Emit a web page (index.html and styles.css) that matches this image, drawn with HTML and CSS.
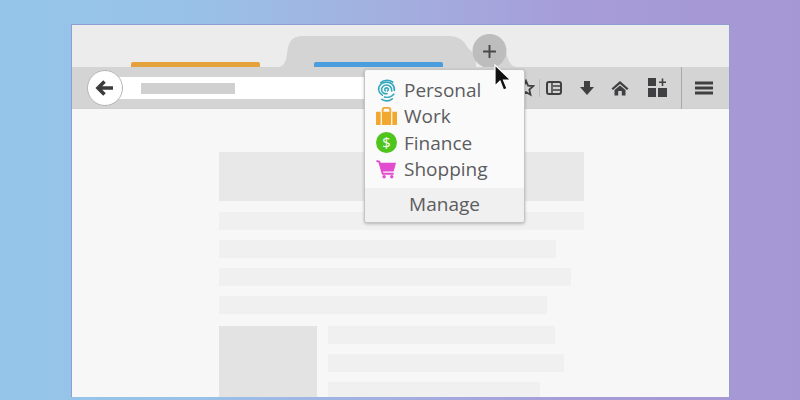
FILE: index.html
```html
<!DOCTYPE html>
<html lang="en">
<head>
<meta charset="utf-8">
<title>Multi-Account Containers</title>
<link rel="stylesheet" href="styles.css">
</head>
<body>
<div class="window">
  <div class="tabstrip">
    <div class="tab tab-orange"><span class="tab-line line-orange"></span></div>
    <div class="tab tab-active">
      <svg class="tab-shape" viewBox="0 0 198 31" preserveAspectRatio="none"><path d="M0 31C6 31 8 25 9 18C10.500 6 13 0 26 0H170C180 0 186 4 190 12L198 20V31Z" fill="#d4d4d4"/></svg>
      <span class="tab-line line-blue"></span>
    </div>
    <div class="newtab">
      <svg class="newtab-bg" viewBox="0 0 50 37"><path d="M30 20C40 20 40 24 41 26C43 32 45 36 50 37H30Z" fill="#d4d4d4"/><circle cx="23.500" cy="21" r="17" fill="#bdbdbd"/></svg>
      <svg class="plus" viewBox="0 0 14 14"><path d="M7 1V13M1 7H13" stroke="#48484a" stroke-width="1.800"/></svg>
    </div>
  </div>
  <div class="toolbar">
    <div class="back"><svg viewBox="0 0 20 20"><path d="M9.500 3.500L3 10L9.500 16.500M3.500 10H18" fill="none" stroke="#3c3c3e" stroke-width="3.600"/></svg></div>
    <div class="urlbar"><span class="url-text"></span></div>
    <div class="tools">
      <svg class="ico star" viewBox="0 0 20 20"><path d="M10 2L12.300 7.400L18 7.900L13.700 11.700L15 17.500L10 14.500L5 17.500L6.300 11.700L2 7.900L7.700 7.400Z" fill="none" stroke="#404042" stroke-width="2"/></svg>
      <span class="sep-small"></span>
      <svg class="ico sidebar" viewBox="0 0 16 16"><rect x="1" y="2" width="14" height="12" rx="2" fill="none" stroke="#404042" stroke-width="2"/><path d="M6 2V14M7 6H14M7 10H14" stroke="#404042" stroke-width="1.500"/></svg>
      <svg class="ico download" viewBox="0 0 16 16"><path d="M5 1H11V7H15L8 15L1 7H5Z" fill="#404042"/></svg>
      <svg class="ico home" viewBox="0 0 18 16"><path d="M9 1L0.500 8.500L2 10L9 4L16 10L17.500 8.500ZM3.500 10L9 5.500L14.500 10V15.500H10.800V11H7.200V15.500H3.500Z" fill="#404042"/></svg>
      <svg class="ico grid" viewBox="0 0 19 19"><rect x="0" y="0" width="8" height="8" fill="#404042"/><rect x="0" y="10" width="8" height="9" fill="#404042"/><rect x="10" y="10" width="9" height="9" fill="#404042"/><path d="M14.500 0.500V8M11 4.200H18" stroke="#404042" stroke-width="1.600"/></svg>
      <span class="sep-tall"></span>
      <svg class="ico menu" viewBox="0 0 18 14"><path d="M0 2H18M0 7H18M0 12H18" stroke="#404042" stroke-width="2.800" stroke-linecap="round"/></svg>
    </div>
  </div>
  <div class="content">
    <div class="hero"></div>
    <div class="line w-full"></div>
    <div class="line w-337"></div>
    <div class="line w-352"></div>
    <div class="line w-328"></div>
    <div class="media">
      <div class="thumb"></div>
      <div class="media-lines">
        <div class="line w-227"></div>
        <div class="line w-236"></div>
        <div class="line w-212"></div>
      </div>
    </div>
  </div>

  <div class="popup">
    <ul class="list">
      <li class="item">
        <svg class="cicon" viewBox="0 0 20 22"><g fill="none" stroke="#35a7bd" stroke-width="1.500" stroke-linecap="round"><path d="M4.500 3.500C7.500 0.500 13 0.500 16 3"/><path d="M17.500 11C18 6 14.500 3 10 3C6 3 2 6 2.500 10.500C2.800 13 4.500 14.500 6 15.500"/><path d="M15 11.500C15.500 8 12.800 5.800 10 5.800C7.200 5.800 5 8 5.300 10.500C5.600 13 8 14.500 10.500 14"/><path d="M11 11.300C12.500 10.500 12 8.500 10 8.500C8.300 8.500 7.800 10.500 9 11.300"/><path d="M8 17.300C11 18 15 17 17 14.500"/><path d="M5.500 19.500C9 21.500 13 21 15.500 19"/></g></svg>
        <span>Personal</span>
      </li>
      <li class="item">
        <svg class="cicon" viewBox="0 0 22 20"><path d="M7 5V3C7 2 8 1 9 1H13C14 1 15 2 15 3V5" fill="none" stroke="#f2a72e" stroke-width="2"/><rect x="0" y="5" width="22" height="14" rx="0.500" fill="#f2a72e"/><path d="M5.500 5V19M16.500 5V19" stroke="#fff" stroke-width="1.200"/></svg>
        <span>Work</span>
      </li>
      <li class="item">
        <svg class="cicon" viewBox="0 0 20 20"><circle cx="10" cy="10" r="10" class="fin"/><text x="10" y="15" class="dollar">$</text></svg>
        <span>Finance</span>
      </li>
      <li class="item">
        <svg class="cicon" viewBox="0 0 22 20"><path d="M3 3H21L18.500 12H6Z" fill="#e34ccf"/><path d="M0.500 1L3.500 2L7 14.500H18.500" fill="none" stroke="#e34ccf" stroke-width="2"/><circle cx="8.500" cy="17.500" r="1.800" fill="#e34ccf"/><circle cx="16.500" cy="17.500" r="1.800" fill="#e34ccf"/></svg>
        <span>Shopping</span>
      </li>
    </ul>
    <div class="manage">Manage</div>
  </div>

  <svg class="cursor" viewBox="0 0 18 28"><path d="M1 1V22L6 17L9.500 26L13 24.500L9.500 16H16.500Z" fill="#111" stroke="#fff" stroke-width="1.200"/></svg>
</div>
</body>
</html>
```

FILE: styles.css
```css
* { box-sizing: border-box; }
html, body { margin: 0; height: 100%; }
body {
  width: 800px;
  height: 400px;
  overflow: hidden;
  padding: 24px 70px 3px 71px;
  background: linear-gradient(90deg, #95c6ea 0%, #99c1e8 25%, #a3aedf 50%, #a69cd8 72%, #a597d3 100%);
  font-family: "Open Sans", "Liberation Sans", sans-serif;
}
.window {
  position: relative;
  height: 373px;
  border: 1px solid #8f9fd2;
  border-bottom: 0;
  background: #f7f7f7;
  display: flex;
  flex-direction: column;
  overflow: visible;
}
.tabstrip {
  height: 42px;
  background: #ececec;
  display: flex;
  align-items: flex-end;
  padding-left: 59px;
}
.tab { position: relative; height: 31px; display: flex; align-items: flex-end; }
.tab-orange { width: 129px; margin-right: 18px; }
.tab-active { width: 198px; padding-left: 36px; }
.tab-shape { position: absolute; left: 0; top: 0; width: 100%; height: 31px; display: block; }
.tab-line { position: relative; display: block; height: 5px; border-radius: 2px 2px 0 0; }
.line-orange { width: 129px; background: #e5a23c; }
.line-blue { width: 129px; background: #4a9edd; }
.newtab { position: relative; width: 50px; height: 37px; margin-left: -10px; }
.newtab-bg { position: absolute; left: 0; top: 0; width: 50px; height: 37px; }
.plus { position: absolute; left: 16px; top: 14px; width: 15px; height: 15px; }
.toolbar {
  height: 42px;
  background: #d4d4d4;
  border-bottom: 1px solid #cfcfcf;
  display: flex;
  align-items: center;
  padding-left: 15px;
  position: relative;
}
.back {
  width: 36px;
  height: 36px;
  border-radius: 50%;
  background: #fff;
  border: 1px solid #b5b5b5;
  display: flex;
  align-items: center;
  justify-content: center;
  position: relative;
  z-index: 1;
  flex: none;
}
.back svg { width: 20px; height: 20px; }
.urlbar {
  width: 300px;
  height: 22px;
  background: #fff;
  margin-left: -18px;
  padding: 6px 0 0 36px;
  flex: none;
}
.url-text { display: block; width: 94px; height: 11px; background: #d0d0d0; }
.tools { flex: 1; position: relative; height: 100%; display: flex; align-items: center; padding-left: 112px; }
.ico { display: block; flex: none; }
.star { width: 18px; height: 18px; }
.sep-small { width: 1px; height: 18px; background: #bbb; margin: 0 6px 0 4px; }
.sidebar { width: 16px; height: 16px; }
.download { width: 16px; height: 16px; margin-left: 17px; }
.home { width: 18px; height: 16px; margin-left: 16px; }
.grid { width: 19px; height: 19px; margin-left: 19px; }
.sep-tall { width: 1px; height: 42px; background: #a9a9a9; margin-left: 14px; }
.menu { width: 18px; height: 14px; margin-left: 13px; }
.content { flex: 1; padding: 43px 0 0 147px; overflow: hidden; }
.hero { width: 365px; height: 49px; background: #e8e8e8; margin-bottom: 11px; }
.line { height: 18px; background: #f0f0f0; margin-bottom: 10px; }
.w-full { width: 365px; }
.w-337 { width: 337px; }
.w-352 { width: 352px; }
.w-328 { width: 328px; }
.w-227 { width: 227px; }
.w-236 { width: 236px; }
.w-212 { width: 212px; }
.media { display: flex; gap: 11px; margin-top: 12px; }
.thumb { width: 98px; height: 72px; background: #e3e3e3; flex: none; }
.media-lines { flex: 1; }
.popup {
  position: absolute;
  left: 292px;
  top: 44px;
  width: 161px;
  height: 154px;
  background: #fafafa;
  border: 1px solid #c4c4c4;
  border-radius: 3px;
  box-shadow: 0 1px 3px rgba(0,0,0,.25);
  display: flex;
  flex-direction: column;
  color: #5c5c5f;
  font-size: 19px;
}
.list { list-style: none; margin: 0; padding: 7px 0 0 11px; flex: 1; }
.item { height: 26.300px; display: flex; align-items: center; gap: 7px; }
.cicon { width: 21px; height: 23px; flex: none; margin-block: -1px; }
.fin { fill: #4fc51c; }
.dollar { fill: #fff; font-size: 14px; text-anchor: middle; font-family: "Open Sans", sans-serif; }
.manage { height: 34px; background: #f0f0f0; text-align: center; line-height: 32px; border-radius: 0 0 3px 3px; }
.cursor { position: absolute; left: 422px; top: 39px; width: 18px; height: 28px; }
```
